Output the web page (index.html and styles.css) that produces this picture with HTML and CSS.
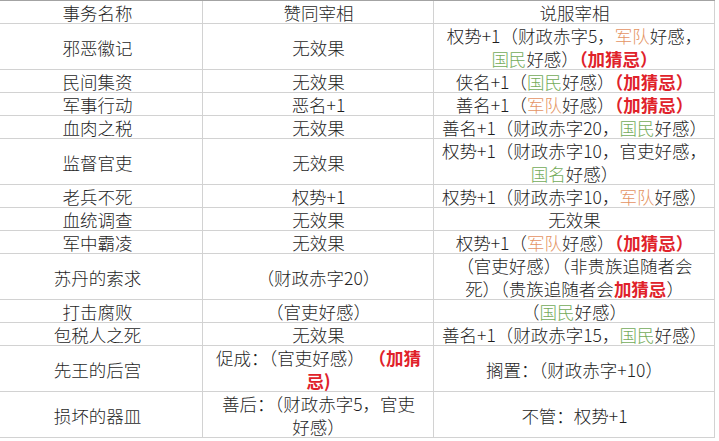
FILE: index.html
```html
<!DOCTYPE html>
<html lang="zh-CN">
<head>
<meta charset="utf-8">
<title>事务名称</title>
<link rel="stylesheet" href="styles.css">
</head>
<body>
<table class="sheet">
  <colgroup>
    <col class="c1"><col class="c2"><col class="c3">
  </colgroup>
  <tr class="head"><td>事务名称</td><td>赞同宰相</td><td>说服宰相</td></tr>
  <tr><td>邪恶徽记</td><td>无效果</td><td>权势+1（财政赤字5，<span class="army">军队</span>好感，<br><span class="folk">国民</span>好感）<b class="sus">（加猜忌）</b></td></tr>
  <tr><td>民间集资</td><td>无效果</td><td>侠名+1（<span class="folk">国民</span>好感）<b class="sus">（加猜忌）</b></td></tr>
  <tr><td>军事行动</td><td>恶名+1</td><td>善名+1（<span class="army">军队</span>好感）<b class="sus">（加猜忌）</b></td></tr>
  <tr><td>血肉之税</td><td>无效果</td><td>善名+1（财政赤字20，<span class="folk">国民</span>好感）</td></tr>
  <tr><td>监督官吏</td><td>无效果</td><td>权势+1（财政赤字10，官吏好感，<br><span class="folk">国名</span>好感）</td></tr>
  <tr><td>老兵不死</td><td>权势+1</td><td>权势+1（财政赤字10，<span class="army">军队</span>好感）</td></tr>
  <tr><td>血统调查</td><td>无效果</td><td>无效果</td></tr>
  <tr><td>军中霸凌</td><td>无效果</td><td>权势+1（<span class="army">军队</span>好感）<b class="sus">（加猜忌）</b></td></tr>
  <tr><td>苏丹的索求</td><td>（财政赤字20）</td><td>（官吏好感）（非贵族追随者会<br>死）（贵族追随者会<b class="sus">加猜忌</b>）</td></tr>
  <tr><td>打击腐败</td><td>（官吏好感）</td><td>（<span class="folk">国民</span>好感）</td></tr>
  <tr><td>包税人之死</td><td>无效果</td><td>善名+1（财政赤字15，<span class="folk">国民</span>好感）</td></tr>
  <tr><td>先王的后宫</td><td>促成：（官吏好感） <b class="sus">（加猜<br>忌)</b></td><td>搁置：（财政赤字+10）</td></tr>
  <tr><td>损坏的器皿</td><td>善后：（财政赤字5，官吏<br>好感）</td><td>不管：权势+1</td></tr>
</table>
</body>
</html>
```

FILE: styles.css
```css
html, body {
  margin: 0;
  padding: 0;
  background: #ffffff;
}

.sheet {
  border-collapse: separate;
  border-spacing: 0;
  table-layout: fixed;
  width: 715px;
  font-family: "Noto Sans CJK SC", "Microsoft YaHei", sans-serif;
  font-size: 17.5px;
  font-weight: 300;
  line-height: 23px;
  color: #1f1f1f;
  border-top: 1px solid #a3a3a3;
}

.c1 { width: 203px; }
.c2 { width: 231px; }
.c3 { width: 281px; }

.sheet td {
  border: none;
  padding: 0;
  text-align: center;
  vertical-align: middle;
  white-space: nowrap;
  box-shadow: inset -1px -1px 0 #d2d2d2;
}

.sheet td:first-child {
  padding-right: 8px;
}

.army { color: #e49463; }
.folk { color: #73ab59; }
.sus {
  color: #e0222a;
  font-weight: bold;
}
```
